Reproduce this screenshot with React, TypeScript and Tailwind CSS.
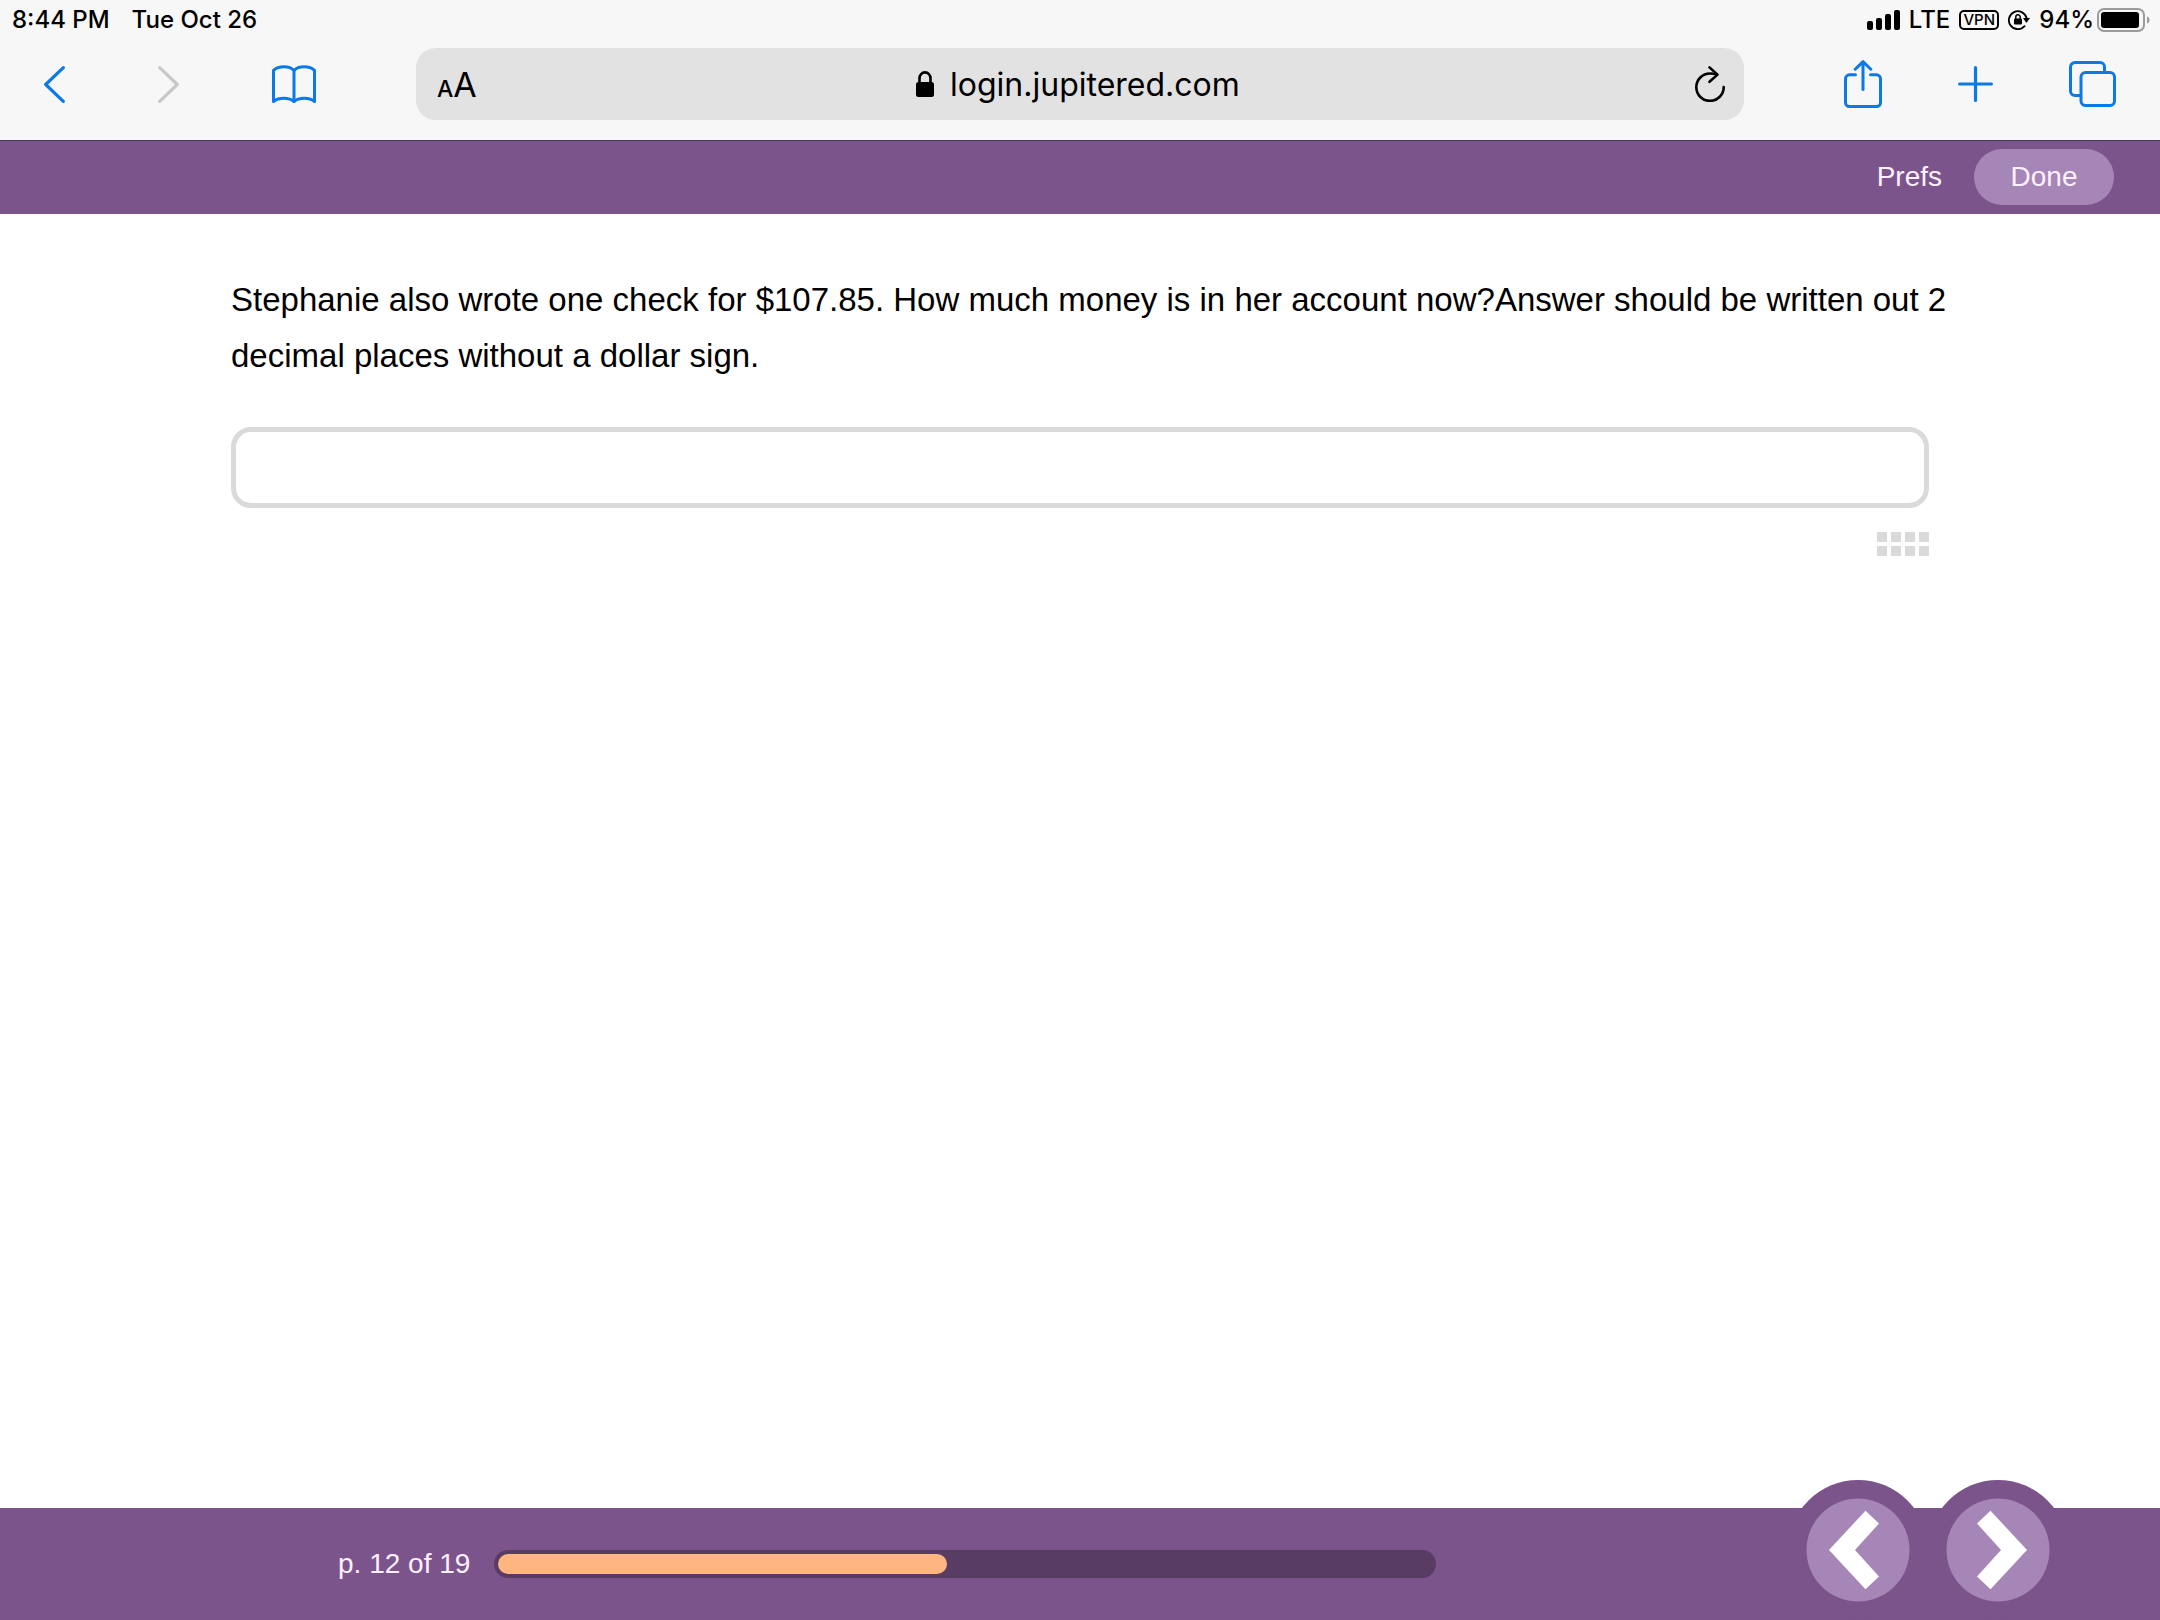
import type { ReactNode } from "react";

const CURRENT_PAGE = 12;
const TOTAL_PAGES = 19;
const PROGRESS = 48;

const SignalIcon = () => (
  <svg viewBox="0 0 33 20" className="w-[33px] h-5" fill="currentColor" aria-hidden="true">
    <rect x="0" y="11" width="6" height="9" rx="2" />
    <rect x="9" y="8" width="6" height="12" rx="2" />
    <rect x="18" y="4" width="6" height="16" rx="2" />
    <rect x="27" y="0" width="6" height="20" rx="2" />
  </svg>
);

const RotationLockIcon = () => (
  <svg viewBox="0 0 22 20" className="w-[22px] h-5" fill="none" stroke="currentColor" aria-hidden="true">
    <path d="M16.600 16.200A9 9 0 1 1 18.600 8" strokeWidth="1.800" strokeLinecap="round" />
    <path d="M15 8h7l-3.600 5z" fill="currentColor" stroke="none" />
    <rect x="6" y="8.600" width="8" height="6" rx="1" fill="currentColor" stroke="none" />
    <path d="M7.800 9V7a2.200 2.200 0 0 1 4.400 0v2" strokeWidth="1.500" />
  </svg>
);

const BatteryIcon = () => (
  <svg viewBox="0 0 53 24" className="w-[53px] h-6" aria-hidden="true">
    <rect x="1" y="1" width="46" height="22" rx="6" fill="none" stroke="#9b9b9b" strokeWidth="2" />
    <rect x="4" y="4" width="38" height="16" rx="3" fill="#000" />
    <path d="M50 8.500c3.400 1 3.400 6 0 7z" fill="#9b9b9b" />
  </svg>
);

const BackIcon = () => (
  <svg viewBox="0 0 21 37" className="w-[21px] h-[37px]" fill="none" stroke="currentColor" strokeWidth="3.200" strokeLinecap="round" strokeLinejoin="round" aria-hidden="true">
    <path d="M19.300 1.700 1.700 18.500l17.600 16.800" />
  </svg>
);

const ForwardIcon = () => (
  <svg viewBox="0 0 21 37" className="w-[21px] h-[37px]" fill="none" stroke="currentColor" strokeWidth="3.200" strokeLinecap="round" strokeLinejoin="round" aria-hidden="true">
    <path d="m1.700 1.700 17.600 16.800L1.700 35.300" />
  </svg>
);

const BookIcon = () => (
  <svg viewBox="0 0 44 38" className="w-11 h-[38px]" fill="none" stroke="currentColor" strokeWidth="3" strokeLinecap="round" strokeLinejoin="round" aria-hidden="true">
    <path d="M22 5.400C17.500.4 6.500.4 1.500 5.400V36.500C7 32.300 17 32.300 22 36.500 27 32.300 37 32.300 42.500 36.500V5.400C37.500.4 26.500.4 22 5.400Z" />
    <path d="M22 5.400V36.500" />
  </svg>
);

const LockIcon = () => (
  <svg viewBox="0 0 18 26" className="w-[18px] h-[26px]" aria-hidden="true">
    <rect x="0" y="11" width="18" height="15" rx="2.500" fill="currentColor" />
    <path d="M3.500 12V7.200a5.500 5.800 0 0 1 11 0V12" fill="none" stroke="currentColor" strokeWidth="2.600" />
  </svg>
);

const ReloadIcon = () => (
  <svg viewBox="0 0 30 36" className="w-[30px] h-9" fill="none" stroke="currentColor" strokeWidth="2.600" strokeLinecap="round" strokeLinejoin="round" aria-hidden="true">
    <path d="M28.700 21A13.700 13.700 0 1 1 15 7.500c2.500 0 4.500.2 6.500.8" />
    <path d="m14.500 1.400 8 7.200-8 7.200" />
  </svg>
);

const ShareIcon = () => (
  <svg viewBox="0 0 38 48" className="w-[38px] h-12" fill="none" stroke="currentColor" strokeWidth="3" strokeLinecap="round" strokeLinejoin="round" aria-hidden="true">
    <path d="M11.500 14.800H5.500a4 4 0 0 0-4 4v23.700a4 4 0 0 0 4 4h27a4 4 0 0 0 4-4V18.800a4 4 0 0 0-4-4h-6" />
    <path d="M19 29.500V1.600M11.200 9.200 19 1.600l7.800 7.600" />
  </svg>
);

const PlusIcon = () => (
  <svg viewBox="0 0 35 36" className="w-[35px] h-9" fill="none" stroke="currentColor" strokeWidth="3.200" strokeLinecap="round" aria-hidden="true">
    <path d="M17.500 1.600v32.800M1.600 18h31.800" />
  </svg>
);

const TabsIcon = () => (
  <svg viewBox="0 0 47 46" className="w-[47px] h-[46px]" fill="none" stroke="currentColor" strokeWidth="3" strokeLinecap="round" aria-hidden="true">
    <rect x="12" y="11.500" width="33.500" height="33" rx="4.500" />
    <path d="M10.500 34.600H6a4.500 4.500 0 0 1-4.500-4.500V6A4.500 4.500 0 0 1 6 1.500h25A4.500 4.500 0 0 1 35.500 6v4" />
  </svg>
);

function StatusBar() {
  return (
    <div className="flex h-10 items-center justify-between pl-3 pr-[10px] text-[24px] font-medium">
      <div className="flex gap-[22px]">
        <span>8:44 PM</span>
        <span>Tue Oct 26</span>
      </div>
      <div className="flex items-center gap-[9px]">
        <SignalIcon />
        <span>LTE</span>
        <span className="flex h-5 w-10 items-center justify-center rounded-[5px] border-2 border-black text-[15px]">
          VPN
        </span>
        <RotationLockIcon />
        <span className="flex items-center gap-[3px]">
          94%
          <BatteryIcon />
        </span>
      </div>
    </div>
  );
}

function Toolbar() {
  return (
    <div className="flex items-center gap-[100px] px-11 pt-2 pb-5 text-[#0b79e6]">
      <div className="flex items-center gap-[93px]">
        <button aria-label="Back">
          <BackIcon />
        </button>
        <button aria-label="Forward" disabled className="text-[#c8c8c8]">
          <ForwardIcon />
        </button>
        <button aria-label="Bookmarks">
          <BookIcon />
        </button>
      </div>

      <div className="flex h-[72px] flex-1 items-center rounded-[20px] bg-[#e2e2e2] pl-[21px] pr-[19px] text-black">
        <button aria-label="Text size" className="flex items-baseline">
          <span className="text-[23px] font-medium">A</span>
          <span className="text-[34px]">A</span>
        </button>
        <label className="flex flex-1 items-center justify-center gap-4 pr-4">
          <LockIcon />
          <input
            type="text"
            aria-label="Address"
            defaultValue="login.jupitered.com"
            className="field-sizing-content bg-transparent pt-px text-[32px] outline-none"
          />
        </label>
        <button aria-label="Reload">
          <ReloadIcon />
        </button>
      </div>

      <div className="flex items-center gap-[76px]">
        <button aria-label="Share">
          <ShareIcon />
        </button>
        <button aria-label="New tab">
          <PlusIcon />
        </button>
        <button aria-label="Show tabs">
          <TabsIcon />
        </button>
      </div>
    </div>
  );
}

function NavButton({ label, children }: { label: string; children: ReactNode }) {
  return (
    <button aria-label={label} className="size-[140px] rounded-full bg-[#7b548c]">
      <svg viewBox="0 0 140 140" className="size-full" aria-hidden="true">
        <circle cx="70" cy="70" r="51.500" fill="#a686b7" />
        {children}
      </svg>
    </button>
  );
}

export default function App() {
  return (
    <div className="flex min-h-screen flex-col bg-white text-black">
      <header className="border-b border-[#4c3a58] bg-[#f7f7f7] font-['Inter',sans-serif]">
        <StatusBar />
        <Toolbar />
      </header>

      <nav className="flex items-center justify-end gap-8 bg-[#7b548c] pt-2 pr-[46px] pb-[9px] font-['Liberation_Sans',Arial,sans-serif] text-[28px] text-[#fdf0ff]">
        <button>Prefs</button>
        <button className="h-14 w-[140px] rounded-full bg-[#a686b7]">Done</button>
      </nav>

      <main className="mx-auto w-full max-w-[1698px] flex-1 pt-[58px] font-['Liberation_Sans',Arial,sans-serif] text-[33px] leading-[56px]">
        <label htmlFor="answer" className="-mr-6 block">
          Stephanie also wrote one check for $107.85. How much money is in her
          account now?Answer should be written out 2 decimal places without a
          dollar sign.
        </label>
        <input
          id="answer"
          type="text"
          className="mt-[43px] block h-[81px] w-full rounded-[20px] border-5 border-[#dadada] px-5 outline-none"
        />
        <button aria-label="Show keypad" className="mt-6 ml-auto grid grid-cols-4 gap-1">
          {[1, 2, 3, 4, 5, 6, 7, 8].map((key) => (
            <span key={key} className="size-[10px] bg-[#dadada]" />
          ))}
        </button>
      </main>

      <footer className="flex h-28 items-center bg-[#7b548c] pl-[338px] pr-[92px] font-['Liberation_Sans',Arial,sans-serif] text-[28px] text-[#fdf0ff]">
        <span>
          p. {CURRENT_PAGE} of {TOTAL_PAGES}
        </span>
        <div className="ml-6 mr-[352px] h-7 flex-1 rounded-full bg-[#583c64] p-1">
          <div className="h-full rounded-full bg-[#ffb580]" style={{ width: `${PROGRESS}%` }} />
        </div>
        <div className="-mt-7 flex">
          <NavButton label="Previous page">
            <path d="M77.500 30.700 91 43.500 67 70l24 26.500-13.500 12.800L41 70z" fill="#fff" />
          </NavButton>
          <NavButton label="Next page">
            <path d="M62.500 30.700 49 43.500 73 70 49 96.500l13.500 12.800L99 70z" fill="#fff" />
          </NavButton>
        </div>
      </footer>
    </div>
  );
}
